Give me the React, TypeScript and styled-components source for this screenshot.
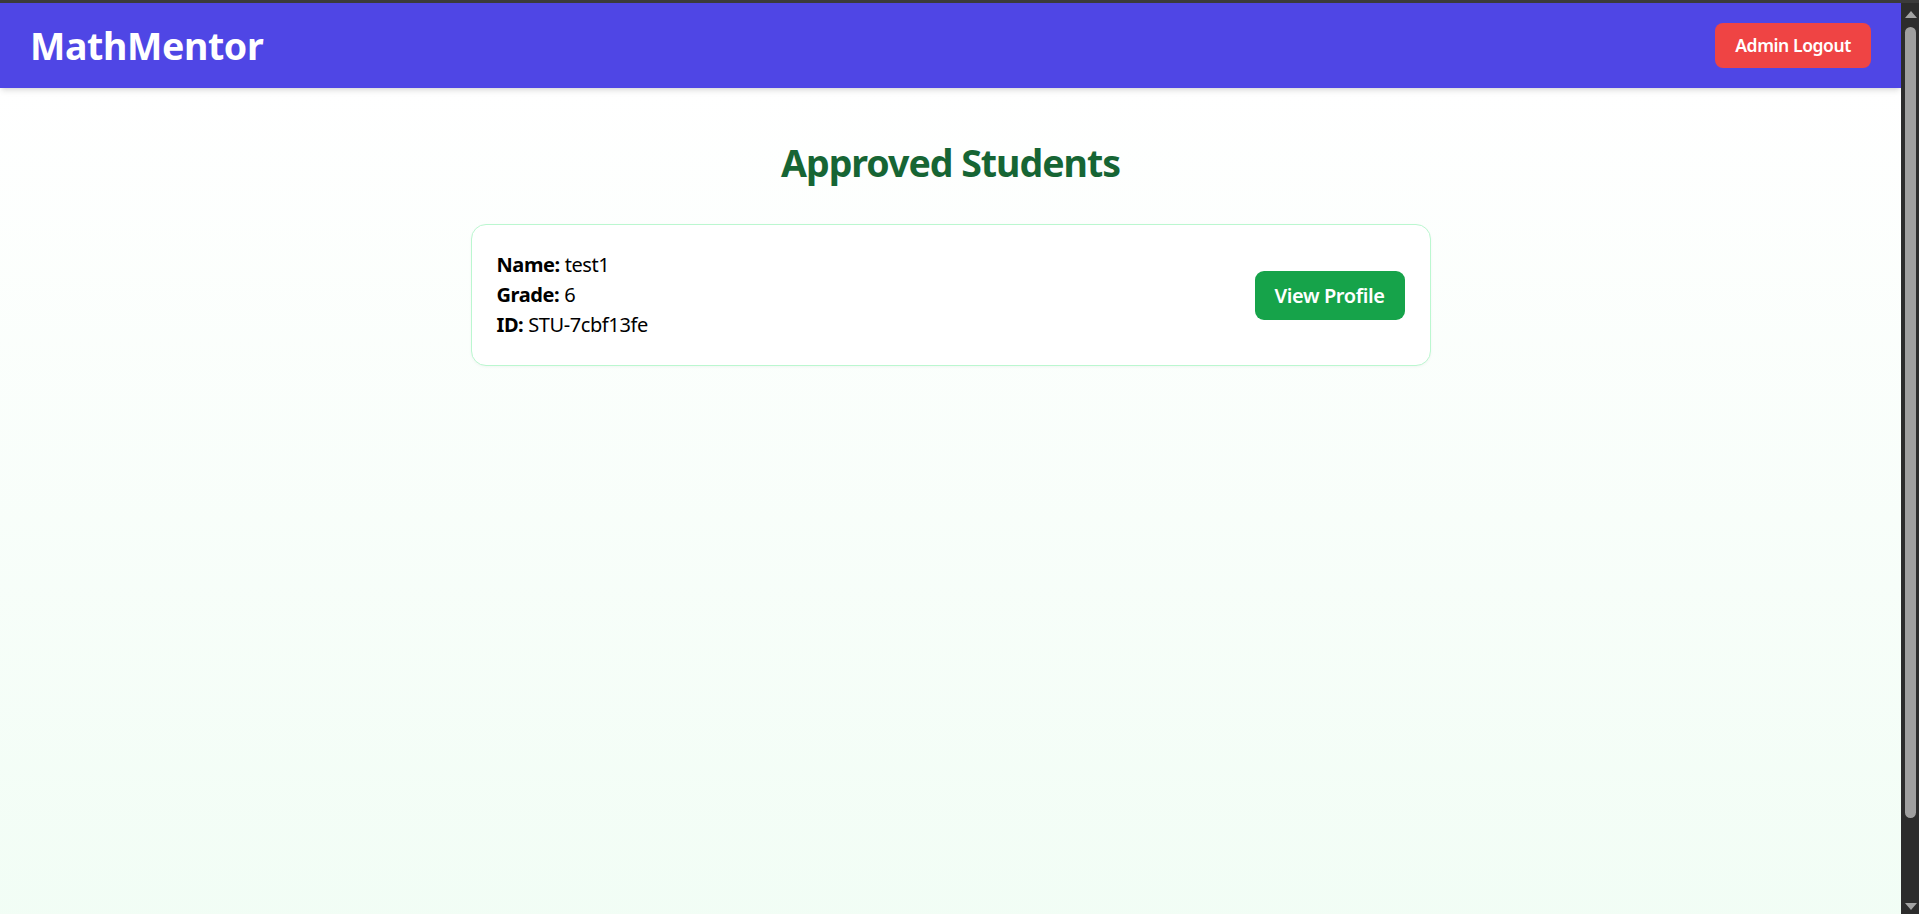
import React from "react";
import styled, { createGlobalStyle } from "styled-components";

const GlobalStyle = createGlobalStyle`
  html, body {
    margin: 0;
    height: 100%;
    overflow: hidden;
  }
  body {
    font-family: "Noto Sans", "Open Sans", "Liberation Sans", sans-serif;
    color: #111827;
    background: #2c2c2c;
    letter-spacing: -0.025em;
  }
  * { box-sizing: border-box; }
`;

const Window = styled.div`
  height: 100vh;
  display: flex;
  flex-direction: column;
`;

const TopStrip = styled.div`
  height: 3px;
  flex: none;
  background: #3b3b3b;
`;

const Shell = styled.div`
  flex: 1;
  min-height: 0;
  display: flex;
`;

const Viewport = styled.div`
  flex: 1;
  min-width: 0;
  overflow: hidden;
  background: #f0fdf4;
`;

const ScrollTrack = styled.div`
  width: 18px;
  flex: none;
  background: #2c2c2c;
  display: flex;
  flex-direction: column;
  align-items: center;
  padding: 8px 0 4px 1px;
`;

const Arrow = styled.div<{ $dir: "up" | "down" }>`
  width: 0;
  height: 0;
  border-left: 6px solid transparent;
  border-right: 6px solid transparent;
  ${(p) =>
    p.$dir === "up"
      ? "border-bottom: 7px solid #a3a3a3;"
      : "border-top: 7px solid #a3a3a3; margin-top: auto;"}
`;

const Thumb = styled.div`
  width: 11px;
  height: 791px;
  margin-top: 9px;
  border-radius: 6px;
  background: #9f9f9f;
`;

const Page = styled.div`
  min-height: calc(100vh + 15px);
  background: linear-gradient(to bottom, #ffffff 0%, #f0fdf4 100%);
  display: flex;
  flex-direction: column;
`;

const Header = styled.header`
  height: 85px;
  padding: 0 30px;
  background: #4f46e5;
  display: flex;
  align-items: center;
  justify-content: space-between;
  box-shadow: 0 4px 6px -1px rgba(0, 0, 0, 0.1), 0 2px 4px -2px rgba(0, 0, 0, 0.1);
  position: relative;
  z-index: 1;
`;

const Brand = styled.h1`
  margin: 0;
  font-size: 37.5px;
  line-height: 45px;
  font-weight: 700;
  letter-spacing: -0.01em;
  color: #ffffff;
`;

const Button = styled.button<{ $variant: "danger" | "success"; $size: "sm" | "md" }>`
  border: none;
  cursor: pointer;
  font-family: inherit;
  letter-spacing: inherit;
  font-weight: 600;
  color: #ffffff;
  padding: 10px 20px;
  border-radius: ${(p) => (p.$size === "sm" ? "8px" : "9px")};
  font-size: ${(p) => (p.$size === "sm" ? "17.5px" : "20px")};
  line-height: ${(p) => (p.$size === "sm" ? "25px" : "29px")};
  background: ${(p) => (p.$variant === "danger" ? "#ef4444" : "#16a34a")};
`;

const Main = styled.main`
  width: 960px;
  margin: 0 auto;
  padding-top: 52px;
  display: flex;
  flex-direction: column;
`;

const Title = styled.h2`
  margin: 0 0 39px;
  text-align: center;
  font-size: 37.5px;
  line-height: 45px;
  font-weight: 700;
  letter-spacing: -0.027em;
  color: #166534;
`;

const Card = styled.div`
  background: #ffffff;
  border: 1.25px solid #bbf7d0;
  border-radius: 15px;
  padding: 25px;
  display: flex;
  align-items: center;
  justify-content: space-between;
  box-shadow: 0 1px 3px rgba(0, 0, 0, 0.04);
`;

const Info = styled.div`
  display: flex;
  flex-direction: column;
`;

const Line = styled.p`
  margin: 0;
  font-size: 20px;
  line-height: 30px;
  color: #000000;
`;

const Label = styled.strong`
  font-weight: 700;
`;

const students = [{ name: "test1", grade: "6", id: "STU-7cbf13fe" }];

export default function App() {
  return (
    <>
      <GlobalStyle />
      <Window>
        <TopStrip />
        <Shell>
          <Viewport>
            <Header>
              <Brand>MathMentor</Brand>
              <Button $variant="danger" $size="sm">Admin Logout</Button>
            </Header>
            <Page>
              <Main>
                <Title>Approved Students</Title>
                {students.map((s) => (
                  <Card key={s.id}>
                    <Info>
                      <Line><Label>Name:</Label> {s.name}</Line>
                      <Line><Label>Grade:</Label> {s.grade}</Line>
                      <Line><Label>ID:</Label> {s.id}</Line>
                    </Info>
                    <Button $variant="success" $size="md">View Profile</Button>
                  </Card>
                ))}
              </Main>
            </Page>
          </Viewport>
          <ScrollTrack>
            <Arrow $dir="up" />
            <Thumb />
            <Arrow $dir="down" />
          </ScrollTrack>
        </Shell>
      </Window>
    </>
  );
}
